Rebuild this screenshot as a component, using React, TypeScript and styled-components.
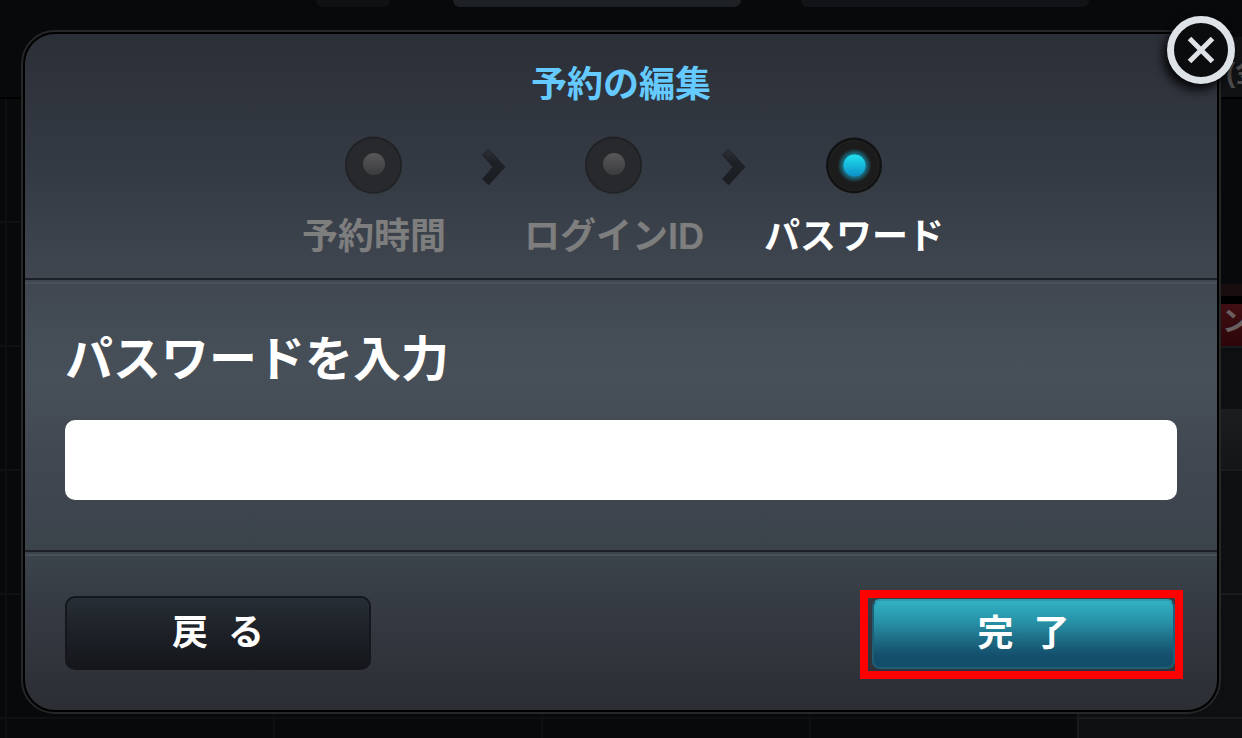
import React from "react";
import styled, { createGlobalStyle } from "styled-components";

const GlobalStyle = createGlobalStyle`
  *, *::before, *::after { box-sizing: border-box; }
  html, body, #root { height: 100%; }
  body {
    margin: 0;
    background: #08090b;
    color: #fff;
    font-family: "Liberation Sans", "Noto Sans CJK JP", sans-serif;
    overflow: hidden;
  }
  button, input { font: inherit; color: inherit; }
`;

const Screen = styled.div`
  position: relative;
  min-height: 100%;
  overflow: hidden;
`;

const Guide = styled.div`
  position: absolute;
  inset: 0;
  display: flex;
  flex-direction: column;
`;

const GuideHeader = styled.div`
  height: 99px;
  flex: none;
  display: flex;
  justify-content: space-between;
  border-bottom: 2px solid #000;
`;

const Tabs = styled.div`
  display: flex;
  align-items: flex-start;
  padding-left: 316px;
`;

const Tab = styled.div<{ $width: number; $tone: string; $gap: number }>`
  width: ${(p) => p.$width}px;
  height: 7px;
  flex: none;
  margin-right: ${(p) => p.$gap}px;
  border-radius: 0 0 10px 10px;
  background: ${(p) => p.$tone};
`;

const DayCell = styled.div`
  width: 100px;
  flex: none;
  align-self: flex-end;
  height: 60px;
  display: flex;
  justify-content: flex-end;
  align-items: center;
  overflow: hidden;
  background: #111214;
  color: #4c4c4c;
  font-size: 28px;
  font-weight: 700;
  white-space: nowrap;
`;

const DayText = styled.span`
  width: 16px;
  padding-top: 6px;
`;

const Grid = styled.div`
  flex: 1;
  display: grid;
  grid-template-columns: 7px repeat(4, 268px) 1fr;
`;

const Column = styled.div<{ $edge?: boolean }>`
  border-right: 2px solid ${(p) => (p.$edge ? "#1a1b1d" : "#0e0f11")};
  background: repeating-linear-gradient(transparent 0 122px, #101113 122px 124px) #08090b;
`;

const ProgramColumn = styled.div`
  display: flex;
  flex-direction: column;
  align-items: stretch;
  background: #0e0f11;
`;

const Slot = styled.div<{ $height: number; $tone: string; $line?: boolean }>`
  height: ${(p) => p.$height}px;
  flex: none;
  background: ${(p) => p.$tone};
  border-bottom: ${(p) => (p.$line ? "2px solid #1a1b1d" : "0")};
  display: flex;
  align-items: center;
  justify-content: flex-end;
  overflow: hidden;
  color: #6b6061;
  font-size: 28px;
  line-height: 32px;
  font-weight: 700;
`;

const SlotText = styled.span`
  width: 20px;
  padding-bottom: 6px;
`;

const Overlay = styled.div`
  position: relative;
  padding: 30px 21px 24px;
`;

const Dialog = styled.section`
  position: relative;
  border: 2px solid #262727;
  border-radius: 34px;
  background: #000;
  padding: 2px;
`;

const Panel = styled.form`
  border-radius: 30px;
  background: linear-gradient(#2b2f37, #343a44 20%, #414851 38%, #475059 50%, #424852 62%, #3a424a 78%, #33373f 88%, #2b2f34);
`;

const Header = styled.header`
  display: flex;
  flex-direction: column;
  align-items: center;
  height: 246px;
  padding-top: 24px;
  border-bottom: 2px solid #1e2027;
`;

const Title = styled.h1`
  margin: 0;
  color: #65caff;
  font-size: 36px;
  line-height: 54px;
  font-weight: 700;
`;

const Steps = styled.ol`
  display: flex;
  align-items: flex-start;
  margin: 24px 14px 0 0;
  padding: 0;
  list-style: none;
`;

const Step = styled.li<{ $active?: boolean }>`
  width: 180px;
  display: flex;
  flex-direction: column;
  align-items: center;
  gap: 14px;
  color: ${(p) => (p.$active ? "#fff" : "#7e7e7e")};
  font-size: 36px;
  line-height: 54px;
  font-weight: 700;
  white-space: nowrap;
`;

const ChevronItem = styled.li`
  width: 60px;
  display: flex;
  justify-content: center;
  padding-top: 10px;
`;

const Body = styled.div`
  height: 272px;
  padding: 44px 40px 0;
  border-bottom: 2px solid #1e2027;
  background: linear-gradient(#4a515b, #4a515b) 0 2px / 100% 2px no-repeat;
`;

const Label = styled.label`
  display: block;
  font-size: 48px;
  line-height: 72px;
  font-weight: 700;
`;

const PasswordInput = styled.input`
  display: block;
  width: 100%;
  height: 80px;
  margin-top: 24px;
  padding: 0 20px;
  border: 0;
  border-radius: 10px;
  background: #fff;
  color: #111;
  font-size: 36px;
`;

const Footer = styled.footer`
  display: flex;
  justify-content: space-between;
  align-items: flex-start;
  height: 158px;
  padding: 44px 40px 0;
  background: linear-gradient(#4b515b, #4b515b) 0 2px / 100% 2px no-repeat;
`;

const Button = styled.button<{ $primary?: boolean }>`
  width: ${(p) => (p.$primary ? 303 : 306)}px;
  height: ${(p) => (p.$primary ? 70 : 74)}px;
  padding: 0;
  border: 2px solid ${(p) => (p.$primary ? "#1f5f75" : "#15171c")};
  border-top-color: ${(p) => (p.$primary ? "#2c9dae" : "#15171c")};
  border-radius: ${(p) => (p.$primary ? 8 : 10)}px;
  background: ${(p) =>
    p.$primary
      ? "linear-gradient(#31b1c3, #2791a6 32%, #1c6781 62%, #14506d 82%, #124d69)"
      : "linear-gradient(#272e35, #1d2127 50%, #14161a)"};
  color: #fff;
  font-size: 36px;
  line-height: 54px;
  font-weight: 700;
  white-space: pre;
`;

const Highlight = styled.div`
  margin: -6px -6px 0 0;
  padding: 1px 0 2px 4px;
  border: 8px solid #ff0000;
  display: flex;
`;

const Close = styled.button`
  position: absolute;
  top: -16px;
  right: -16px;
  width: 68px;
  height: 68px;
  padding: 0;
  border: 7px solid #dee3e8;
  border-radius: 50%;
  background: #0b0c0e;
  box-shadow: -4px 6px 10px rgba(0, 0, 0, 0.85);
  display: grid;
  place-items: center;
`;

function StepDot({ active }: { active?: boolean }) {
  return active ? (
    <svg width="60" height="60" viewBox="0 0 60 60" aria-hidden="true">
      <defs>
        <linearGradient id="lamp" x1="0" y1="0" x2="0" y2="1">
          <stop offset="0" stopColor="#22e2f0" />
          <stop offset="0.5" stopColor="#17b9dc" />
          <stop offset="1" stopColor="#0d8fc8" />
        </linearGradient>
        <radialGradient id="glow">
          <stop offset="0.6" stopColor="#178ca5" stopOpacity="0.9" />
          <stop offset="1" stopColor="#178ca5" stopOpacity="0" />
        </radialGradient>
      </defs>
      <circle cx="30" cy="31" r="28" fill="#3b3f43" />
      <circle cx="30" cy="29.5" r="28" fill="#111213" />
      <circle cx="30" cy="29.5" r="25" fill="#1c1c1d" stroke="#242425" strokeWidth="1" />
      <circle cx="30.5" cy="29.5" r="17" fill="url(#glow)" />
      <circle cx="30.5" cy="29.5" r="11" fill="url(#lamp)" />
    </svg>
  ) : (
    <svg width="60" height="60" viewBox="0 0 60 60" aria-hidden="true">
      <defs>
        <linearGradient id="lampOff" x1="0" y1="0" x2="0" y2="1">
          <stop offset="0" stopColor="#58585a" />
          <stop offset="1" stopColor="#3b3c3e" />
        </linearGradient>
      </defs>
      <circle cx="29.5" cy="30" r="28.5" fill="#33383c" />
      <circle cx="29.5" cy="29" r="28.5" fill="#1f2124" />
      <circle cx="29.5" cy="29.5" r="27" fill="#27292c" />
      <circle cx="30" cy="28" r="11" fill="url(#lampOff)" />
    </svg>
  );
}

function Chevron() {
  return (
    <svg width="24" height="44" viewBox="0 0 24 44" aria-hidden="true">
      <defs>
        <linearGradient id="chevron" x1="0" y1="0" x2="0" y2="1">
          <stop offset="0" stopColor="#2e3135" />
          <stop offset="0.35" stopColor="#1e2125" />
          <stop offset="1" stopColor="#1b1e22" />
        </linearGradient>
      </defs>
      <path
        d="M0.5 9L6.5 3L23 21L6.5 39L0.5 33L11 21Z"
        fill="url(#chevron)"
        stroke="#1c1f23"
        strokeWidth="0.8"
      />
    </svg>
  );
}

export default function App() {
  return (
    <Screen>
      <GlobalStyle />
      <Guide aria-hidden="true">
        <GuideHeader>
          <Tabs>
            <Tab $width={74} $tone="#101113" $gap={63} />
            <Tab $width={288} $tone="#1d2025" $gap={60} />
            <Tab $width={288} $tone="#131418" $gap={0} />
          </Tabs>
          <DayCell>
            <DayText>(金)</DayText>
          </DayCell>
        </GuideHeader>
        <Grid>
          <Column />
          <Column />
          <Column />
          <Column />
          <Column $edge />
          <ProgramColumn>
            <Slot $height={185} $tone="#08090b" />
            <Slot $height={12} $tone="#190d10" />
            <Slot $height={8} $tone="#000" />
            <Slot $height={44} $tone="linear-gradient(#400f13, #2c0508)" $line>
              <SlotText>ン</SlotText>
            </Slot>
            <Slot $height={61} $tone="#0e0f11" />
            <Slot $height={62} $tone="linear-gradient(#1b1d1f, #141517)" $line />
            <Slot $height={124} $tone="#0e0f11" $line />
            <Slot $height={124} $tone="#0e0f11" $line />
          </ProgramColumn>
        </Grid>
      </Guide>

      <Overlay>
        <Dialog role="dialog" aria-labelledby="dialog-title">
          <Panel onSubmit={(e: React.FormEvent) => e.preventDefault()}>
            <Header>
              <Title id="dialog-title">予約の編集</Title>
              <Steps>
                <Step>
                  <StepDot />
                  予約時間
                </Step>
                <ChevronItem>
                  <Chevron />
                </ChevronItem>
                <Step>
                  <StepDot />
                  ログインID
                </Step>
                <ChevronItem>
                  <Chevron />
                </ChevronItem>
                <Step $active aria-current="step">
                  <StepDot active />
                  パスワード
                </Step>
              </Steps>
            </Header>
            <Body>
              <Label htmlFor="password">パスワードを入力</Label>
              <PasswordInput id="password" type="password" />
            </Body>
            <Footer>
              <Button type="button">{"戻  る"}</Button>
              <Highlight>
                <Button type="submit" $primary>
                  {"完  了"}
                </Button>
              </Highlight>
            </Footer>
          </Panel>
          <Close type="button" aria-label="閉じる">
            <svg width="28" height="28" viewBox="0 0 28 28" aria-hidden="true">
              <path d="M2.5 2.5L25.5 25.5M25.5 2.5L2.5 25.5" stroke="#dee3e8" strokeWidth="5" />
            </svg>
          </Close>
        </Dialog>
      </Overlay>
    </Screen>
  );
}
